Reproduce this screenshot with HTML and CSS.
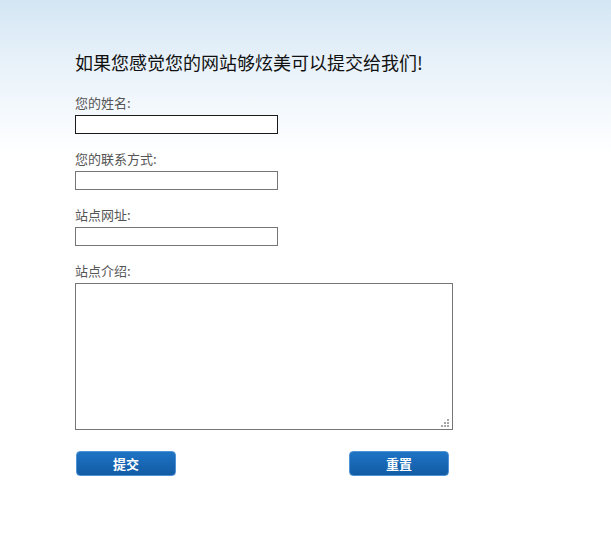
FILE: index.html
```html
<!DOCTYPE html>
<html lang="zh-CN">
<head>
<meta charset="utf-8">
<title>提交网站</title>
<link rel="stylesheet" href="styles.css">
</head>
<body>
<div class="page">
  <h1 class="title">如果您感觉您的网站够炫美可以提交给我们!</h1>
  <form class="form">
    <div class="field">
      <label class="label" for="name">您的姓名:</label>
      <input class="input input-active" id="name" type="text">
    </div>
    <div class="field">
      <label class="label" for="contact">您的联系方式:</label>
      <input class="input" id="contact" type="text">
    </div>
    <div class="field">
      <label class="label" for="url">站点网址:</label>
      <input class="input" id="url" type="text">
    </div>
    <div class="field">
      <label class="label" for="intro">站点介绍:</label>
      <div class="textarea-wrap">
        <textarea class="textarea" id="intro"></textarea>
        <svg class="grip" width="8" height="8" viewBox="0 0 8 8" aria-hidden="true">
          <rect x="6" y="0" width="2" height="2" fill="#a6a6a6"/>
          <rect x="3" y="3" width="2" height="2" fill="#a6a6a6"/>
          <rect x="6" y="3" width="2" height="2" fill="#a6a6a6"/>
          <rect x="0" y="6" width="2" height="2" fill="#a6a6a6"/>
          <rect x="3" y="6" width="2" height="2" fill="#a6a6a6"/>
          <rect x="6" y="6" width="2" height="2" fill="#a6a6a6"/>
        </svg>
      </div>
    </div>
    <div class="actions">
      <button class="btn" type="button">提交</button>
      <button class="btn" type="button">重置</button>
    </div>
  </form>
</div>
</body>
</html>
```
FILE: styles.css
```css
html, body {
  margin: 0;
  padding: 0;
}
body {
  width: 611px;
  height: 534px;
  background: #fff linear-gradient(to bottom, #d4e6f4 0px, #eaf3fa 70px, #ffffff 155px) no-repeat;
  font-family: "Microsoft YaHei", "Noto Sans CJK SC", "Noto Sans", sans-serif;
}
.page {
  padding: 50px 0 0 75px;
}
.title {
  margin: 0 0 20px 0;
  font-size: 18px;
  line-height: 24px;
  font-weight: normal;
  color: #111;
}
.form {
  display: flex;
  flex-direction: column;
  gap: 16px;
}
.field {
  display: flex;
  flex-direction: column;
  align-items: flex-start;
  gap: 3px;
}
.label {
  font-size: 13px;
  line-height: 18px;
  color: #555;
}
.input {
  box-sizing: border-box;
  width: 203px;
  height: 19px;
  margin: 0;
  padding: 0 2px;
  border: 1px solid #767676;
  background: #fff;
  font: 13px "Noto Sans CJK SC", sans-serif;
  outline: none;
}
.input-active {
  border-color: #1a1a1a;
}
.textarea-wrap {
  position: relative;
  width: 378px;
  height: 147px;
}
.textarea {
  display: block;
  box-sizing: border-box;
  width: 378px;
  height: 147px;
  margin: 0;
  padding: 2px;
  border: 1px solid #767676;
  background: #fff;
  font: 13px "Noto Sans CJK SC", sans-serif;
  outline: none;
  resize: none;
}
.grip {
  position: absolute;
  right: 4px;
  bottom: 3px;
  display: block;
}
.actions {
  display: flex;
  gap: 173px;
  padding-left: 1px;
  margin-top: 5px;
}
.btn {
  box-sizing: border-box;
  width: 100px;
  height: 25px;
  margin: 0;
  padding: 0;
  border: 1px solid #4f92d6;
  border-radius: 4px;
  background: linear-gradient(to bottom, #1e74c4 0%, #1867b5 50%, #125ca4 100%);
  color: #fff;
  font-family: "Microsoft YaHei", "Noto Sans CJK SC", sans-serif;
  font-size: 13px;
  font-weight: bold;
  line-height: 23px;
  cursor: pointer;
}
```
